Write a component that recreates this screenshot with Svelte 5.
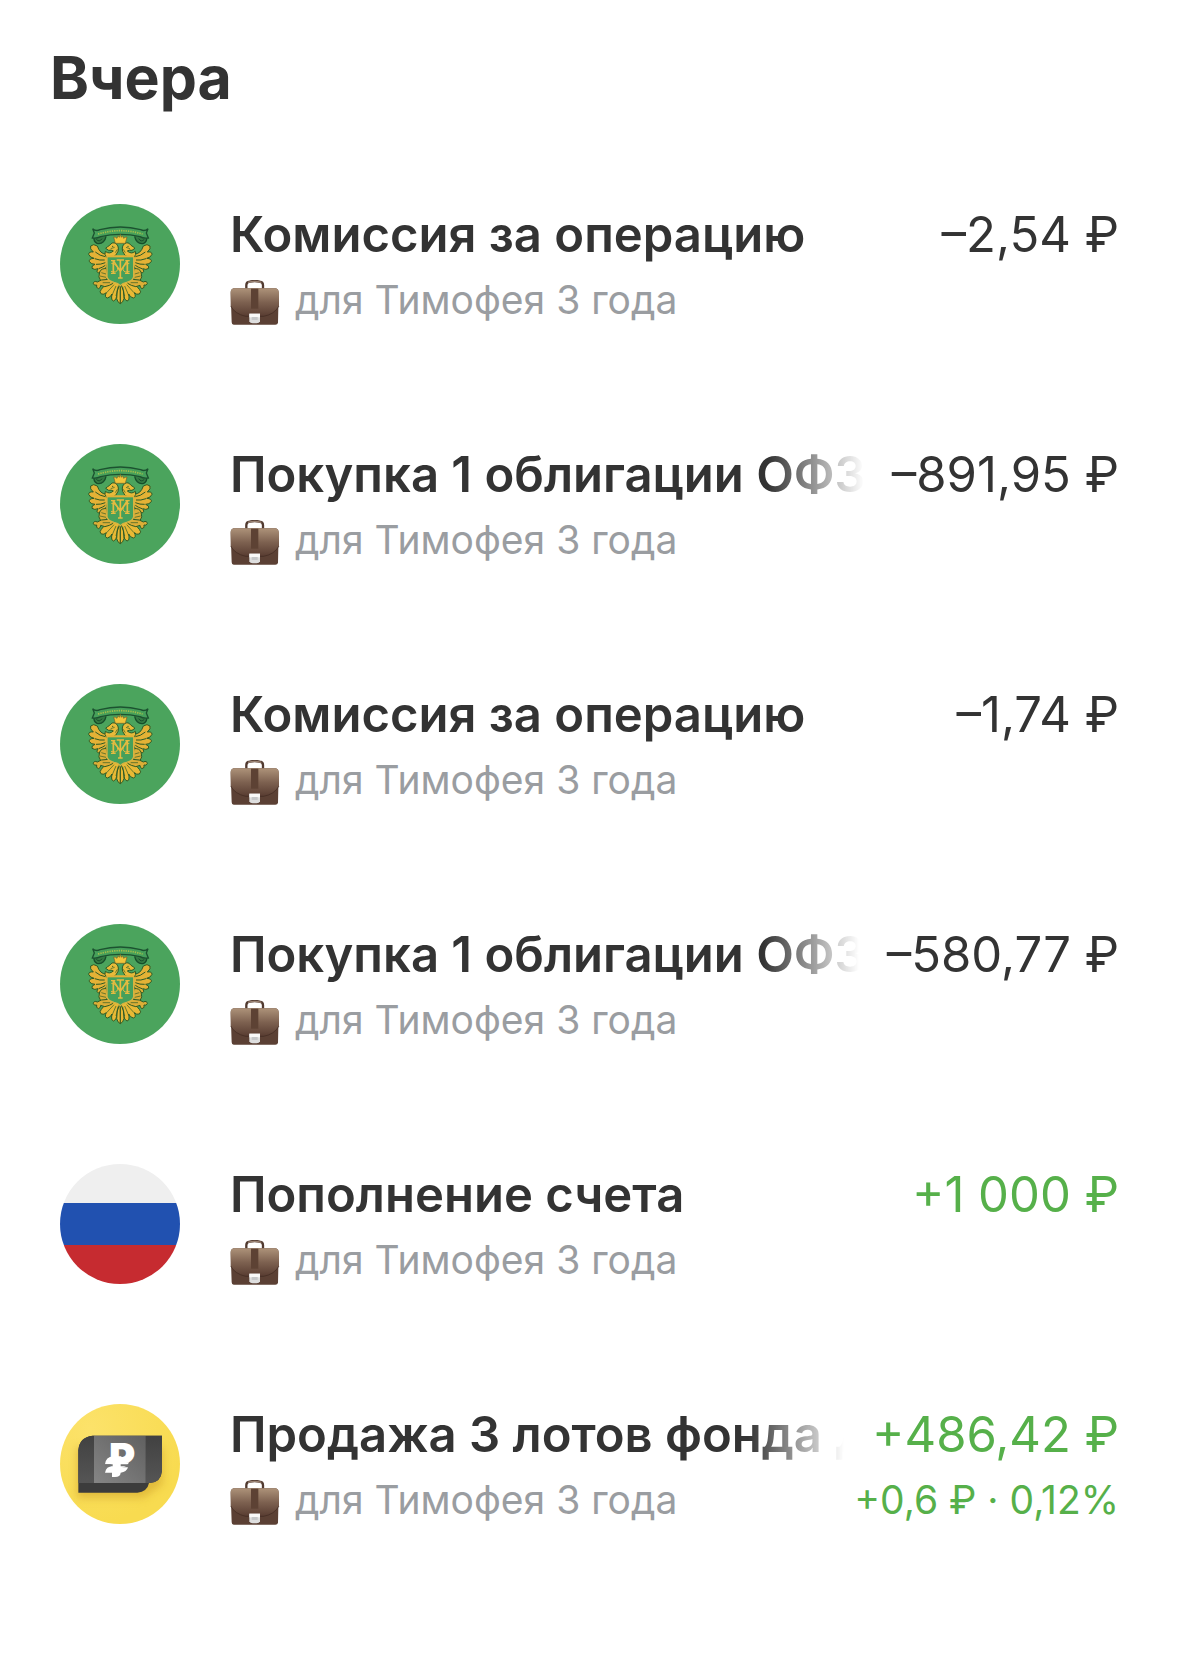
<script lang="ts">
	type Operation = {
		icon: "bond" | "rub" | "fund";
		title: string;
		amount: string;
		income?: boolean;
		profit?: string;
	};

	const account = "для Тимофея 3 года";

	const operations: Operation[] = [
		{ icon: "bond", title: "Комиссия за операцию", amount: "–2,54 ₽" },
		{ icon: "bond", title: "Покупка 1 облигации ОФЗ", amount: "–891,95 ₽" },
		{ icon: "bond", title: "Комиссия за операцию", amount: "–1,74 ₽" },
		{ icon: "bond", title: "Покупка 1 облигации ОФЗ", amount: "–580,77 ₽" },
		{ icon: "rub", title: "Пополнение счета", amount: "+1 000 ₽", income: true },
		{
			icon: "fund",
			title: "Продажа 3 лотов фонда Д",
			amount: "+486,42 ₽",
			income: true,
			profit: "+0,6 ₽ · 0,12%",
		},
	];
</script>

{#snippet eagleHalf()}
	<!-- wing feathers -->
	<g stroke="#2c5a26" stroke-width="3" fill="#e3b236">
		<path d="M138 150 Q120 150 112 126 Q100 118 92 126 Q88 134 100 144 Q86 142 86 151 Q90 161 102 163 Q86 164 88 173 Q94 181 105 181 Q93 185 96 193 Q104 199 114 194 Q107 203 115 207 Q130 204 140 188 L146 160 Z" />
		<path d="M106 144 Q120 156 136 158 M104 164 Q120 170 134 168 M108 181 Q122 182 136 176 M116 194 Q128 190 136 184" fill="none" stroke-width="3" />
	</g>
	<!-- head and neck -->
	<path d="M140 160 Q132 152 136 142 Q148 152 160 141 Q154 137 146 139 L137 133 Q142 128 149 124 Q157 112 168 119 Q178 127 174 142 Q170 156 156 160 Z" fill="#e8bb3a" stroke="#2c5a26" stroke-width="3" />
	<circle cx="158" cy="127" r="2" fill="#2c5a26" />
	<path d="M152 134 L164 130 M166 146 L172 136" stroke="#2c5a26" stroke-width="2" fill="none" />
	<!-- tail -->
	<g fill="#e8b935" stroke="#2c5a26" stroke-width="3">
		<path d="M164 230 Q136 238 124 256 Q116 264 124 270 Q132 273 139 266 Q132 280 142 282 Q152 280 156 270 Q152 290 161 291 Q170 287 170 276 L180 238 Z" />
		<path d="M181 236 Q168 262 170 284 Q173 296 181 299 Z" />
	</g>
	<path d="M162 242 L140 266 M168 246 L156 274 M174 248 L168 276" stroke="#2c5a26" stroke-width="2" />
	<!-- leg and claws -->
	<g fill="#dcae37" stroke="#2c5a26" stroke-width="3">
		<path d="M140 194 Q124 192 119 204 Q113 220 122 230 Q138 234 144 218 Z" />
		<path d="M124 228 L112 234 Q101 229 100 239 Q103 246 110 243 Q107 252 116 254 Q123 250 122 244 Q134 252 148 244 Q160 240 162 232 L146 226 Z" />
	</g>
	<path d="M124 206 L138 210 M120 216 L138 220 M128 236 L150 236" stroke="#2c5a26" stroke-width="2" />
	<!-- ribbon end -->
	<path d="M102 99 Q100 112 111 118 Q122 121 130 113 Q136 108 138 97" fill="#347b43" stroke="#174d2b" stroke-width="4" />
	<path d="M109 106 Q118 116 126 104" fill="none" stroke="#174d2b" stroke-width="3" />
{/snippet}

{#snippet bondIcon()}
	<svg class="avatar" viewBox="0 0 360 360" aria-hidden="true">
		<circle cx="180" cy="180" r="180" fill="#4ba45d" />
		{@render eagleHalf()}
		<g transform="matrix(-1 0 0 1 362 0)">
			{@render eagleHalf()}
		</g>
		<path
			d="M98 74 Q108 83 120 77 Q150 69 181 69 Q212 69 242 77 Q254 83 264 74 L259 87 L265 102 Q250 104 240 98 Q212 91 181 91 Q150 91 122 98 Q110 104 97 102 L103 87 Z"
			fill="#46a05a"
			stroke="#1c5230"
			stroke-width="4"
		/>
		<path d="M114 90 Q150 80 181 80 Q212 80 248 90" fill="none" stroke="#a5bd4b" stroke-width="5" stroke-dasharray="4 3" />
		<!-- crown -->
		<path d="M166 118 L161 99 Q168 99 171 103 L174 95 L178 100 L181 91 L184 100 L188 95 L191 103 Q194 99 201 99 L196 118 Z" fill="#f2c43b" stroke="#775f22" stroke-width="2" />
		<!-- shield -->
		<path d="M141 157 H221 V218 Q219 231 200 235 Q188 237 181 245 Q174 237 162 235 Q143 231 141 218 Z" fill="#45a05a" stroke="#d6b443" stroke-width="4" />
		<path d="M141 157 H221" stroke="#e3b236" stroke-width="6" />
		<g fill="none" stroke="#e5bb40" stroke-width="5">
			<path d="M160 170 V208 M202 170 V208 M160 170 L181 202 L202 170 M181 168 V222" />
			<path d="M153 170 H166 M196 170 H209 M153 208 H167 M195 208 H209 M174 222 H188 M170 168 H192" stroke-width="4" />
			<path d="M154 178 Q174 182 173 196 Q170 208 153 202 M208 178 Q188 182 189 196 Q192 208 209 202" stroke-width="3" />
		</g>
	</svg>
{/snippet}

{#snippet rubIcon()}
	<svg class="avatar" viewBox="0 0 120 120" aria-hidden="true">
		<clipPath id="flag"><circle cx="60" cy="60" r="60" /></clipPath>
		<g clip-path="url(#flag)">
			<rect width="120" height="40" fill="#efefef" />
			<rect y="39" width="120" height="42" fill="#2151b0" />
			<rect y="81" width="120" height="39" fill="#c62b30" />
		</g>
	</svg>
{/snippet}

{#snippet fundIcon()}
	<svg class="avatar" viewBox="0 0 360 360" aria-hidden="true">
		<defs>
			<radialGradient id="yellow" cx="0.25" cy="0.2" r="0.8">
				<stop offset="0" stop-color="#fce26a" />
				<stop offset="1" stop-color="#f8db50" />
			</radialGradient>
			<linearGradient id="plate" x1="0" y1="1" x2="1" y2="0">
				<stop offset="0" stop-color="#858585" />
				<stop offset="1" stop-color="#606060" />
			</linearGradient>
			<linearGradient id="side" x1="0" y1="0" x2="0" y2="1">
				<stop offset="0" stop-color="#414141" />
				<stop offset="1" stop-color="#555" />
			</linearGradient>
			<filter id="shade" x="-20%" y="-20%" width="140%" height="150%">
				<feGaussianBlur stdDeviation="12" />
			</filter>
		</defs>
		<circle cx="180" cy="180" r="180" fill="url(#yellow)" />
		<path d="M50 130 H308 V240 L250 282 H50 Z" fill="#c99a20" opacity="0.5" filter="url(#shade)" />
		<path d="M55 139 Q58 99 98 95 H306 V200 Q303 234 270 237 H267 Q262 263 232 266 H55 Z" fill="#3c3c3c" />
		<path d="M55 139 Q58 99 98 95 H103 V237 H55 Z" fill="url(#side)" />
		<path d="M257 95 H306 V200 Q303 234 270 237 H257 Z" fill="url(#side)" />
		<rect x="102" y="95" width="155" height="142" fill="url(#plate)" />
		<text class="coin" x="147" y="204" font-size="120">Р</text>
		<path d="M135 181 Q137 159 160 157 H184 V175 H207 Q201 190 185 190 H204 Q200 205 182 206 Q181 219 165 219 H156 V206 H135 Q139 187 157 187 V181 Z" fill="#fff" />
		<path d="M135 184 H158 M182 184 H206" stroke="#757575" stroke-width="6" />
	</svg>
{/snippet}

{#snippet briefcase()}
	<svg class="briefcase" viewBox="0 0 150 135" aria-hidden="true">
		<defs>
			<linearGradient id="leather" x1="0" y1="0" x2="0" y2="1">
				<stop offset="0" stop-color="#ad9279" />
				<stop offset="0.5" stop-color="#7d6150" />
				<stop offset="1" stop-color="#583c31" />
			</linearGradient>
		</defs>
		<path d="M49 27 V15 Q49 6 59 5 Q74 1 89 5 Q99 6 99 15 V27" fill="none" stroke="#513a30" stroke-width="7" />
		<path d="M54 7 Q74 1 94 7" fill="none" stroke="#9b8474" stroke-width="4" />
		<path d="M10 25 H138 Q146 28 146 38 L144 128 Q143 134 136 134 H11 Q5 134 5 127 L2 38 Q2 28 10 25 Z" fill="#5b4034" />
		<path d="M10 25 H138 Q146 28 147 38 V78 Q133 103 101 109 H47 Q15 102 2 78 V38 Q2 28 10 25 Z" fill="url(#leather)" />
		<path d="M2 78 Q15 102 47 109 H101 Q133 103 147 78" fill="none" stroke="#40291f" stroke-width="2" />
		<rect x="63" y="26" width="22" height="60" fill="#5d4234" />
		<path d="M58 101 H90 V124 Q88 130 80 130 H68 Q60 130 58 124 Z" fill="#dedede" />
		<path d="M58 101 H90 V112 H58 Z" fill="#f9f9f9" />
		<path d="M65 111 H83 V120 H65 Z" fill="#c6c8ca" />
	</svg>
{/snippet}

<main>
	<h1>Вчера</h1>

	<ul>
		{#each operations as op}
			<li>
				{#if op.icon === "bond"}
					{@render bondIcon()}
				{:else if op.icon === "rub"}
					{@render rubIcon()}
				{:else}
					{@render fundIcon()}
				{/if}

				<div class="info">
					<div class="line">
						<h2>{op.title}</h2>
						<span class="amount" class:income={op.income}>{op.amount}</span>
					</div>
					<div class="line details">
						<p>{@render briefcase()}{account}</p>
						{#if op.profit}
							<span class="profit">{op.profit}</span>
						{/if}
					</div>
				</div>
			</li>
		{/each}
	</ul>
</main>

<style>
	:global(body) {
		margin: 0;
		background: #fff;
	}

	main {
		padding-bottom: 88px;
		font-family: Inter, "Liberation Sans", sans-serif;
		color: #333;
	}

	h1 {
		margin: 0;
		padding: 42px 50px 30px;
		font-size: 59px;
		line-height: 72px;
		font-weight: 700;
	}

	ul {
		margin: 0;
		padding: 0;
		list-style: none;
	}

	li {
		display: flex;
		align-items: flex-start;
		gap: 50px;
		padding: 60px 60px 50px;
	}

	.avatar {
		flex: none;
		width: 120px;
		height: 120px;
	}

	.coin {
		font-family: Inter, sans-serif;
		font-weight: 900;
		fill: #fff;
	}

	.info {
		flex: 1;
		min-width: 0;
	}

	.line {
		display: flex;
		align-items: center;
		justify-content: space-between;
		gap: 28px;
		line-height: 62px;
		white-space: nowrap;
	}

	.details {
		line-height: 68px;
	}

	h2 {
		flex: 1;
		min-width: 0;
		margin: 0;
		overflow: hidden;
		font-size: 49px;
		font-weight: 600;
		mask-image: linear-gradient(to left, transparent, #000 96px);
	}

	.amount {
		font-size: 49px;
	}

	.income,
	.profit {
		color: #56b04a;
	}

	p {
		display: flex;
		align-items: center;
		gap: 15px;
		margin: 0;
		font-size: 39px;
		color: #9a9da1;
	}

	.briefcase {
		width: 50px;
		height: 45px;
		margin-top: 4px;
	}

	.profit {
		font-size: 39px;
	}
</style>
